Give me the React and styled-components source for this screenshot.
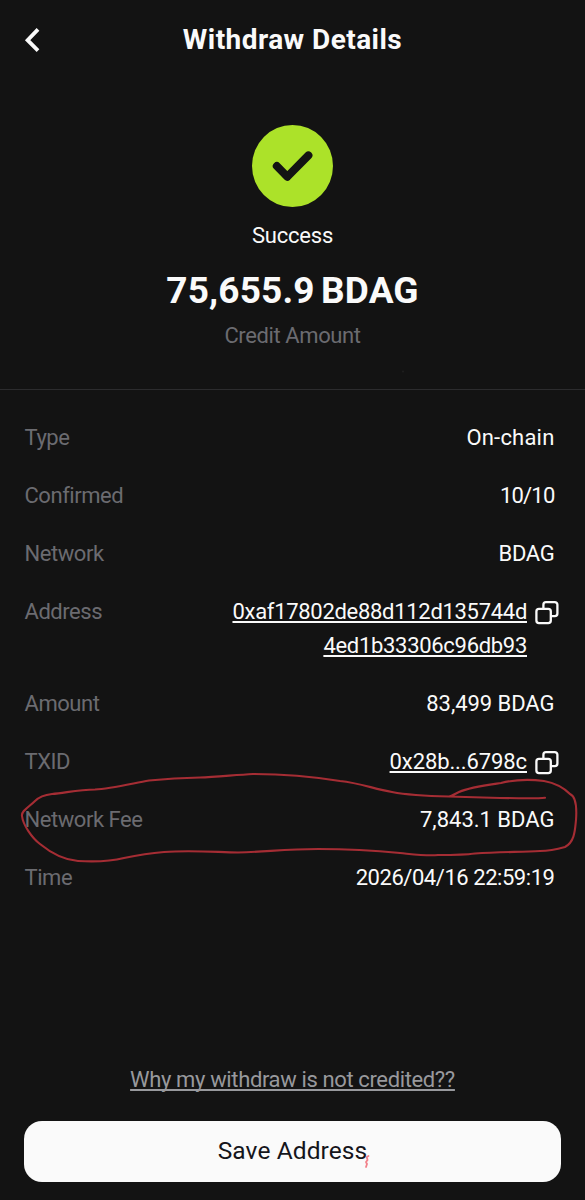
import React from "react";
import styled, { createGlobalStyle } from "styled-components";

const GlobalStyle = createGlobalStyle`
  * { box-sizing: border-box; }
  body { margin: 0; background: #131313; }
`;

const Screen = styled.main`
  position: relative;
  display: flex;
  flex-direction: column;
  width: 585px;
  height: 1200px;
  overflow: hidden;
  background: #131313;
  color: #fafafa;
  font-family: Roboto, "Liberation Sans", sans-serif;
  font-size: 22px;
  line-height: 34px;
`;

const Header = styled.header`
  display: grid;
  grid-template-columns: 60px 1fr 60px;
  align-items: center;
  height: 80px;
`;

const BackButton = styled.button`
  display: flex;
  justify-content: flex-start;
  padding: 0 0 0 22px;
  border: 0;
  background: none;
  color: inherit;
`;

const Title = styled.h1`
  margin: 0;
  text-align: center;
  font-size: 28px;
  font-weight: 700;
  line-height: 34px;
  letter-spacing: 0.45px;
`;

const Summary = styled.section`
  display: flex;
  flex-direction: column;
  align-items: center;
  height: 310px;
  padding-top: 45px;
  border-bottom: 1px solid #2c2c2e;
`;

const StatusBadge = styled.div`
  display: flex;
  width: 81px;
  height: 82px;
  border-radius: 50%;
  background: #ace229;
`;

const Status = styled.div`
  margin-top: 12px;
  letter-spacing: -0.2px;
`;

const Total = styled.div`
  margin-top: 15px;
  font-size: 37px;
  font-weight: 700;
  line-height: 46px;
  letter-spacing: 0.15px;
  word-spacing: -3px;
`;

const Caption = styled.div`
  margin-top: 5px;
  color: #6b6b70;
  letter-spacing: -0.4px;
`;

const Details = styled.dl`
  display: flex;
  flex-direction: column;
  gap: 24px;
  margin: 0;
  padding: 31px 25px 0 24.5px;
`;

const Row = styled.div`
  display: flex;
  justify-content: space-between;
`;

const Label = styled.dt`
  color: #6b6b70;
  letter-spacing: -0.45px;
`;

const Value = styled.dd`
  display: flex;
  align-items: flex-start;
  gap: 8px;
  margin: 0;
  padding-right: ${(p) => (p.$copy ? "0" : "5.5px")};
  text-align: right;
  letter-spacing: ${(p) => p.$tracking}px;
`;

const HashLink = styled.a`
  white-space: pre-line;
  text-decoration: underline;
  text-decoration-thickness: 2px;
  text-underline-offset: 2px;
  text-decoration-skip-ink: none;
`;

const CopyButton = styled.button`
  display: flex;
  padding: 5px 0 0;
  border: 0;
  background: none;
  color: inherit;
`;

const Footer = styled.footer`
  display: flex;
  flex-direction: column;
  align-items: center;
  gap: 24px;
  margin-top: auto;
  padding: 0 24px 18px;
`;

const HelpLink = styled.a`
  color: #98999d;
  letter-spacing: -0.37px;
  text-decoration: underline;
  text-decoration-thickness: 2px;
  text-underline-offset: 2px;
  text-decoration-skip-ink: none;
`;

const SaveButton = styled.button`
  width: 100%;
  height: 61px;
  padding: 0 0 2px;
  border: 0;
  border-radius: 18px;
  background: #fafafa;
  color: #15151b;
  font: 400 24.5px/34px Roboto, "Liberation Sans", sans-serif;
  letter-spacing: 0.1px;
`;

const Ink = styled.svg`
  position: absolute;
  inset: 0;
  pointer-events: none;
`;

const rows = [
  { label: "Type", value: "On-chain", tracking: 0.2 },
  { label: "Confirmed", value: "10/10", tracking: -0.8 },
  { label: "Network", value: "BDAG", tracking: -0.3 },
  { label: "Address", value: "0xaf17802de88d112d135744d\n4ed1b33306c96db93", copy: true, tracking: -0.3 },
  { label: "Amount", value: "83,499 BDAG", tracking: -0.05 },
  { label: "TXID", value: "0x28b...6798c", copy: true, tracking: -0.1 },
  { label: "Network Fee", value: "7,843.1 BDAG", tracking: 0 },
  { label: "Time", value: "2026/04/16 22:59:19", tracking: -0.45 },
];

function CopyIcon() {
  return (
    <svg width="25" height="25" viewBox="0 0 25 25" fill="none" stroke="currentColor" strokeWidth="2.3">
      <rect x="1.4" y="8.8" width="14.4" height="14.4" rx="2.6" />
      <path d="M8.4 8.8V4.7a2.6 2.6 0 0 1 2.6-2.6h8.8a2.6 2.6 0 0 1 2.6 2.6v8.8a2.6 2.6 0 0 1-2.6 2.6h-4" />
    </svg>
  );
}

function DetailRow({ label, value, copy, tracking }) {
  return (
    <Row>
      <Label>{label}</Label>
      <Value $copy={copy} $tracking={tracking}>
        {copy ? <HashLink>{value}</HashLink> : value}
        {copy && (
          <CopyButton aria-label={`Copy ${label}`}>
            <CopyIcon />
          </CopyButton>
        )}
      </Value>
    </Row>
  );
}

export default function App() {
  return (
    <>
      <GlobalStyle />
      <Screen>
        <Header>
          <BackButton aria-label="Back">
            <svg width="24" height="28" viewBox="0 0 24 28" fill="none" stroke="currentColor" strokeWidth="3.8">
              <path d="M16 3.4 5.6 14.2 16 24.6" />
            </svg>
          </BackButton>
          <Title>Withdraw Details</Title>
        </Header>
        <Summary>
          <StatusBadge>
            <svg width="81" height="82" viewBox="0 0 81 82" fill="none" stroke="#131313" strokeWidth="8" strokeLinecap="round" strokeLinejoin="round">
              <path d="M24.8 41 35.3 51.8 56.4 30.4" />
            </svg>
          </StatusBadge>
          <Status>Success</Status>
          <Total>75,655.9 BDAG</Total>
          <Caption>Credit Amount</Caption>
        </Summary>
        <Details>
          {rows.map((row) => (
            <DetailRow key={row.label} {...row} />
          ))}
        </Details>
        <Footer>
          <HelpLink>Why my withdraw is not credited??</HelpLink>
          <SaveButton>Save Address</SaveButton>
        </Footer>
        <Ink width="585" height="1200" viewBox="0 0 585 1200" fill="none" strokeLinecap="round" strokeLinejoin="round">
          <path
            stroke="#a52d34"
            strokeWidth="2.1"
            d="M545 797.7C535 799 520 798 500 798C480 797.5 465 797 449 796.5C425 796 405 794.5 392 792C374 789 360 783 340 781C315 777 280 774 253 774C235 775 215 777 200 777.5C180 778 165 779 149 780.5C130 784 110 789 95 789.5C78 789.5 65 793 52 794C44 795 39 797 35 801C29 807 21 811 22 816C23 825 32 838 40 844C51 853 64 860 78 861C95 862 112 861 124 858C138 855 151 853 164 852C190 850 214 852 238 852.5C265 852 285 849 318 849C360 849 380 851 400 853C420 855 427 856 438 855C455 855 464 855 475 853.5C500 852 520 852 540 851C550 851 558 849 565 847C575 842 575 829 576 820C577 806 575 796 570 794C563 787 555 783 544 781C529 779 513 780 501 783C487 785 470 787 459 792L450 796.5"
          />
          <path stroke="#f06b75" strokeWidth="1.8" opacity="0.85" d="M368.5 1156 366.8 1157 367.5 1160 366 1162 367 1164 366 1167" />
          <circle cx="403" cy="371.5" r="1" fill="#202020" />
        </Ink>
      </Screen>
    </>
  );
}
